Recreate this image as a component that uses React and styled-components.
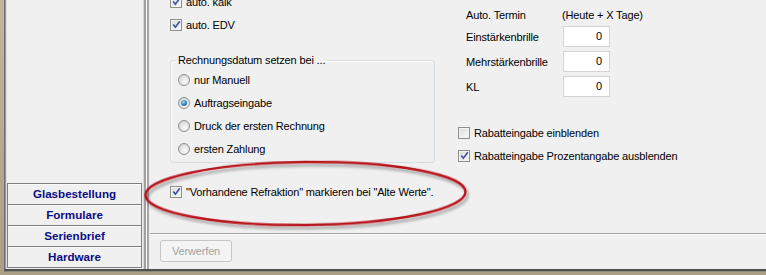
import React from 'react';
import styled, { createGlobalStyle } from 'styled-components';

const GlobalStyle = createGlobalStyle`
  html, body { margin: 0; padding: 0; }
  body {
    background: #b9af95;
    font-family: "Liberation Sans", Arial, sans-serif;
    font-size: 11px;
    letter-spacing: -0.15px;
    color: #000;
  }
  * { box-sizing: border-box; }
`;

const Screen = styled.div`
  position: relative;
  width: 766px;
  height: 275px;
  overflow: hidden;
  background: linear-gradient(#c0b79e, #a99f85);
  display: flex;
  flex-direction: column;
`;

const Frame = styled.div`
  height: 271px;
  margin-left: 4px;
  display: flex;
  background: #f0f0f0;
  border-left: 1px solid #6e6e6e;
  border-bottom: 2px solid #505050;
  box-shadow: inset 1px 0 #9a9a9a, inset 2px 0 #dcdcdc, 0 1px 0 #8c887c;
`;

const Sidebar = styled.nav`
  width: 137px;
  flex: none;
  padding: 0 0 1px 2px;
  display: flex;
  flex-direction: column;
  justify-content: flex-end;
`;

const NavList = styled.div`
  border: 1px solid #7f7f7f;
  display: flex;
  flex-direction: column;
`;

const NavButton = styled.div`
  height: ${p => (p.$first ? 20 : 21)}px;
  line-height: 20px;
  border-top: ${p => (p.$first ? 'none' : '1px solid #7f7f7f')};
  text-align: center;
  font-weight: bold;
  font-size: 11.6px;
  letter-spacing: 0;
  color: #0c0c84;
  background: #f0f0f0;
  box-shadow: inset 0 1px #fbfbfb;
`;

const Splitter = styled.div`
  width: 8px;
  flex: none;
  background: linear-gradient(
    to right,
    #f0f0f0 0 1px,
    #d8d8d8 1px 2px,
    #a0a0a0 2px 4px,
    #fafafa 4px 5px,
    #a6a6a6 5px 7px,
    #f0f0f0 7px
  );
`;

const Main = styled.div`
  flex: 1;
  display: flex;
  flex-direction: column;
  min-width: 0;
`;

const Content = styled.div`
  flex: 1;
  display: grid;
  grid-template-columns: 288px 1fr;
  padding-left: 20px;
  overflow: hidden;
`;

const LeftColumn = styled.div`
  margin-top: -10px;
  display: flex;
  flex-direction: column;
`;

const RightColumn = styled.div`
  display: flex;
  flex-direction: column;
`;

const Separator = styled.div`
  height: 1px;
  flex: none;
  background: #a0a0a0;
  box-shadow: 0 1px #fdfdfd;
`;

const Footer = styled.div`
  height: 35px;
  flex: none;
  padding: 6px 0 0 10px;
`;

const Button = styled.button`
  width: 72px;
  height: 22px;
  padding: 0;
  border: 1px solid #c6c6c6;
  border-radius: 3px;
  background: #f4f4f4;
  color: #a2a2a2;
  font-family: "Liberation Sans", Arial, sans-serif;
  font-size: 11px;
  letter-spacing: -0.15px;
`;

const OptionRow = styled.label`
  height: 23px;
  display: flex;
  align-items: center;
  gap: 4px;
  white-space: nowrap;
  margin-top: ${p => p.$mt || 0}px;
`;

const CheckBox = styled.span`
  width: 12px;
  height: 12px;
  flex: none;
  border: 1px solid #8e8f8f;
  background: linear-gradient(135deg, #d9d9d9, #fbfbfb);
  box-shadow: inset 0 0 0 1px #f3f3f3;
  display: flex;
  align-items: center;
  justify-content: center;
`;

const RadioDot = styled.span`
  width: 12px;
  height: 12px;
  flex: none;
  border-radius: 50%;
  border: 1px solid #8e8f8f;
  background: radial-gradient(circle at 60% 65%, #fdfdfd, #d4d4d4 80%);
  display: flex;
  align-items: center;
  justify-content: center;
  &::after {
    content: '';
    display: ${p => (p.$checked ? 'block' : 'none')};
    width: 6px;
    height: 6px;
    border-radius: 50%;
    background: radial-gradient(circle at 40% 35%, #9ad8f8, #2a75b8 60%, #174a80);
  }
`;

const Group = styled.fieldset`
  margin: 18px 0 0 0;
  width: 265px;
  padding: 1px 7px 2px 7px;
  border: 1px solid #d6dde2;
  border-radius: 3px;
  box-shadow: inset 1px 1px #fbfbfb;
`;

const Legend = styled.legend`
  padding: 0 2px;
  margin-left: -2px;
  line-height: 13px;
`;

const TerminHeader = styled.div`
  height: 22px;
  margin: 4px 0 0 8px;
  display: grid;
  grid-template-columns: 96px auto;
  align-items: center;
`;

const FieldGrid = styled.div`
  margin-left: 8px;
  display: grid;
  grid-template-columns: 97px 47px;
  grid-auto-rows: 21px;
  row-gap: 4px;
  align-items: center;
`;

const NumberBox = styled.div`
  height: 21px;
  border: 1px solid #d4d4d4;
  background: #fff;
  text-align: right;
  padding-right: 7px;
  line-height: 19px;
`;

const Annotation = styled.svg`
  position: absolute;
  left: 140px;
  top: 156px;
  width: 335px;
  height: 80px;
  pointer-events: none;
`;

function Check({ checked, label, mt }) {
  return (
    <OptionRow $mt={mt}>
      <CheckBox>
        {checked && (
          <svg width="9" height="9" viewBox="0 0 9 9">
            <path d="M1.3 4.4 L3.4 7.2 L7.8 1.2" fill="none" stroke="#3c50a0" strokeWidth="1.6" />
          </svg>
        )}
      </CheckBox>
      <span>{label}</span>
    </OptionRow>
  );
}

function Radio({ checked, label }) {
  return (
    <OptionRow>
      <RadioDot $checked={checked} />
      <span>{label}</span>
    </OptionRow>
  );
}

const navItems = ['Glasbestellung', 'Formulare', 'Serienbrief', 'Hardware'];
const fields = [
  ['Einstärkenbrille', '0'],
  ['Mehrstärkenbrille', '0'],
  ['KL', '0'],
];

export default function App() {
  return (
    <Screen>
      <GlobalStyle />
      <Frame>
        <Sidebar>
          <NavList>
            {navItems.map((n, i) => (
              <NavButton key={n} $first={i === 0}>{n}</NavButton>
            ))}
          </NavList>
        </Sidebar>
        <Splitter />
        <Main>
          <Content>
            <LeftColumn>
              <Check checked label="auto. kalk" />
              <Check checked label="auto. EDV" />
              <Group>
                <Legend>Rechnungsdatum setzen bei ...</Legend>
                <Radio label="nur Manuell" />
                <Radio checked label="Auftragseingabe" />
                <Radio label="Druck der ersten Rechnung" />
                <Radio label="ersten Zahlung" />
              </Group>
              <Check checked mt={17} label={'"Vorhandene Refraktion" markieren bei "Alte Werte".'} />
            </LeftColumn>
            <RightColumn>
              <TerminHeader>
                <span>Auto. Termin</span>
                <span>(Heute + X Tage)</span>
              </TerminHeader>
              <FieldGrid>
                {fields.map(([l, v]) => (
                  <React.Fragment key={l}>
                    <span>{l}</span>
                    <NumberBox>{v}</NumberBox>
                  </React.Fragment>
                ))}
              </FieldGrid>
              <Check mt={24} label="Rabatteingabe einblenden" />
              <Check checked label="Rabatteingabe Prozentangabe ausblenden" />
            </RightColumn>
          </Content>
          <Separator />
          <Footer>
            <Button disabled>Verwerfen</Button>
          </Footer>
        </Main>
      </Frame>
      <Annotation viewBox="0 0 335 80">
        <defs>
          <filter id="sh" x="-10%" y="-30%" width="120%" height="160%">
            <feDropShadow dx="2" dy="3" stdDeviation="1.6" floodColor="#000" floodOpacity="0.35" />
          </filter>
        </defs>
        <ellipse
          cx="165.5"
          cy="37.5"
          rx="160"
          ry="31.5"
          fill="none"
          stroke="#b8141c"
          strokeWidth="2.4"
          filter="url(#sh)"
          transform="rotate(-0.6 165.5 37.5)"
        />
      </Annotation>
    </Screen>
  );
}
